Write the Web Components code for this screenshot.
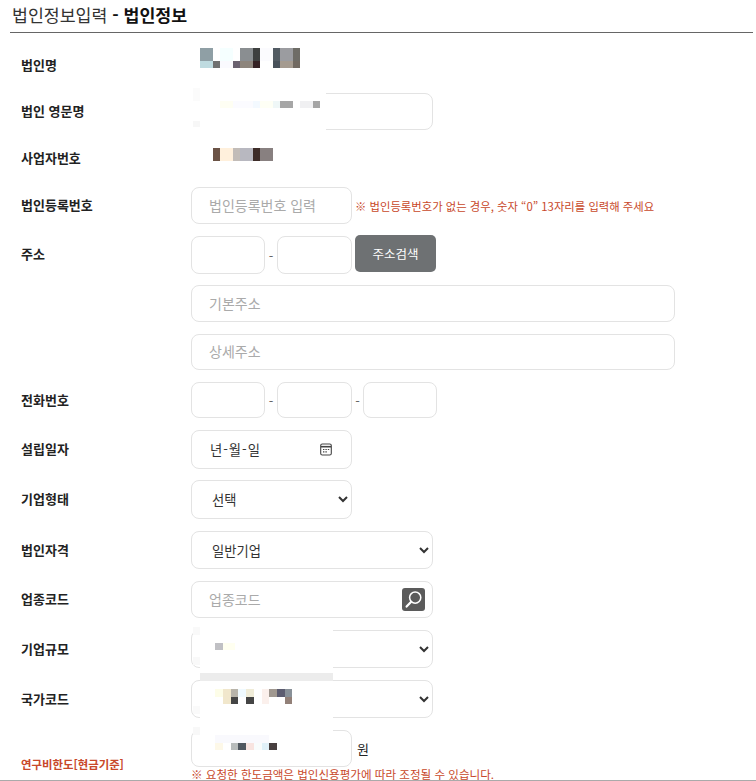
<!DOCTYPE html>
<html lang="ko">
<head>
<meta charset="utf-8">
<title>법인정보입력</title>
<style>
    html, body { margin: 0; background: #fff; }
    body { font-family: "Noto Sans CJK KR", "Noto Sans", sans-serif; color: #222; }
</style>
</head>
<body>
<corp-page>
    <page-header main="법인정보입력" sub="법인정보"></page-header>

    <form-row style="--gap:13px;--h:38px"><span slot="label">법인명</span></form-row>
    <form-row style="--gap:9px;--h:37px"><span slot="label">법인 영문명</span><text-input size="lg"></text-input></form-row>
    <form-row style="--gap:10px;--h:37px"><span slot="label">사업자번호</span></form-row>
    <form-row style="--gap:10px;--h:37px">
        <span slot="label">법인등록번호</span>
        <text-input size="md" placeholder="법인등록번호 입력"></text-input>
        <red-note style="margin-left:3px">※ 법인등록번호가 없는 경우, 숫자 “0” 13자리를 입력해 주세요</red-note>
    </form-row>
    <form-row style="--gap:11px;--h:38px">
        <span slot="label">주소</span>
        <text-input size="xs" style="margin-top:2px"></text-input>
        <dash-sep style="margin-top:2px"></dash-sep>
        <text-input size="sm" style="margin-top:2px"></text-input>
        <gray-button style="margin-left:3px">주소검색</gray-button>
    </form-row>
    <form-row style="--gap:12px;--h:37px"><text-input size="full" placeholder="기본주소"></text-input></form-row>
    <form-row style="--gap:12px;--h:36px"><text-input size="full" placeholder="상세주소"></text-input></form-row>
    <form-row style="--gap:12px;--h:36px">
        <span slot="label">전화번호</span>
        <text-input size="xs"></text-input>
        <dash-sep></dash-sep>
        <text-input size="sm"></text-input>
        <dash-sep style="width:11px"></dash-sep>
        <text-input size="xs"></text-input>
    </form-row>
    <form-row style="--gap:12px;--h:39px"><span slot="label">설립일자</span><date-input></date-input></form-row>
    <form-row style="--gap:11px;--h:39px"><span slot="label">기업형태</span><select-input size="md" value="선택"></select-input></form-row>
    <form-row style="--gap:12px;--h:38px"><span slot="label">법인자격</span><select-input size="lg" value="일반기업"></select-input></form-row>
    <form-row style="--gap:12px;--h:37px">
        <span slot="label">업종코드</span>
        <text-input size="lg" placeholder="업종코드" search></text-input>
    </form-row>
    <form-row style="--gap:12px;--h:38px"><span slot="label">기업규모</span><select-input size="lg"></select-input></form-row>
    <form-row style="--gap:12px;--h:38px"><span slot="label">국가코드</span><select-input size="lg"></select-input></form-row>
    <form-row style="--gap:12px;--h:37px;--label-align:end;--label-drop:-7px">
        <red-note slot="label" strong>연구비한도[현금기준]</red-note>
        <text-input size="md"></text-input>
        <span style="font-size:13px;margin-left:5px">원</span>
    </form-row>
    <form-row style="--gap:1px;--h:12px"><red-note wide>※ 요청한 한도금액은 법인신용평가에 따라 조정될 수 있습니다.</red-note></form-row>

    <!-- 가림 처리된 영역 -->
    <blur-patch box="176,33,150,98" cells="
        193,88,7,13,#fbfbfb;193,121,7,6,#f7f7f7;
        220,101,13,7,#fefef3;233,101,20,7,#fbfbff;253,101,7,7,#f3f9ff;260,101,13,7,#fefff5;
        273,101,7,7,#eff7f7;280,101,13,7,#a6a6a6;300,101,13,7,#f0f0f2;313,101,7,7,#a5a5a5;
        200,48,13,13,#8f9fa5;220,48,13,13,#f5ffff;240,48,13,13,#8a8e91;253,48,7,13,#3e403f;
        260,48,13,13,#fbfbfe;273,48,7,13,#525b63;280,48,13,13,#9b9ca0;293,48,7,13,#6e6c66;
        200,61,13,7,#bfdbe0;213,61,7,7,#707070;220,61,13,7,#fafafe;233,61,7,7,#6a6270;
        240,61,13,7,#8d857c;253,61,7,7,#352224;273,61,7,7,#48515a;280,61,13,7,#a59b90;293,61,7,7,#726a62;
        213,148,7,13,#6b5346;220,148,13,13,#fff0dc;233,148,7,13,#c2bcb8;240,148,13,13,#b8b8c0;
        253,148,7,13,#3d2c28;260,148,13,13,#888080"></blur-patch>
    <blur-patch box="200,627,133,46" cells="
        193,627,7,8,#f9f9f9;193,657,7,8,#f9f9f9;
        215,643,8,7,#c0c0c4;223,643,12,7,#fffff0"></blur-patch>
    <blur-patch box="200,673,133,8" fill="#ececec"></blur-patch>
    <blur-patch box="200,681,133,37" cells="
        193,706,7,8,#fafafa;
        215,689,8,8,#fdfde8;223,689,8,15,#f1e7cc;231,689,7,8,#b8b4aa;238,689,8,8,#f0faff;
        246,689,8,8,#f0ecd8;262,689,7,15,#fbf0ec;269,689,8,8,#a09890;277,689,8,8,#5c5c70;285,689,7,8,#889098;
        231,697,7,7,#454545;246,697,8,7,#454545;285,697,7,7,#928078"></blur-patch>
    <blur-patch box="200,718,133,48" cells="
        193,727,7,8,#f8f8f8;
        215,735,54,8,#f9f9fd;
        215,743,8,7,#fdf8e8;231,743,7,7,#b8bcbc;238,743,8,7,#505860;246,743,8,7,#f8e4e0;
        254,743,8,7,#f8fcfc;262,743,7,7,#e0f0f8;269,743,8,7,#484040"></blur-patch>
</corp-page>

<script>
// 페이지 프레임
class CorpPage extends HTMLElement {
    constructor() {
        super();
        this.attachShadow({ mode: 'open' });
        this.shadowRoot.innerHTML = `
            <style>
                :host {
                    display: flex;
                    flex-direction: column;
                    position: relative;
                    width: 756px;
                    height: 781px;
                    box-sizing: border-box;
                    border-bottom: 1px solid #aaa;
                    overflow: hidden;
                    background: #fff;
                }
            </style>
            <slot></slot>
        `;
    }
}

class PageHeader extends HTMLElement {
    constructor() {
        super();
        this.attachShadow({ mode: 'open' });
        this.shadowRoot.innerHTML = `
            <style>
                :host {
                    display: block;
                    margin: 0 3px 0 10px;
                    height: 33px;
                    box-sizing: border-box;
                    border-bottom: 1px solid #666;
                    padding-left: 2px;
                    font-size: 17.3px;
                    line-height: 30px;
                    color: #333;
                }
                b { color: #111; }
            </style>
            ${this.getAttribute('main')} <b>- ${this.getAttribute('sub')}</b>
        `;
    }
}

class FormRow extends HTMLElement {
    constructor() {
        super();
        this.attachShadow({ mode: 'open' });
        this.shadowRoot.innerHTML = `
            <style>
                :host {
                    display: grid;
                    grid-template-columns: 170px 1fr;
                    flex: none;
                    margin-top: var(--gap, 12px);
                    padding-left: 21px;
                    height: var(--h, 37px);
                }
                .label {
                    display: flex;
                    align-items: center;
                    align-self: var(--label-align, center);
                    margin-bottom: var(--label-drop, 0);
                    padding-bottom: 2px;
                    font-size: 13px;
                    font-weight: 700;
                    color: #222;
                }
                .field { display: flex; align-items: center; min-width: 0; }
            </style>
            <div class="label"><slot name="label"></slot></div>
            <div class="field"><slot></slot></div>
        `;
    }
}

const FIELD_WIDTHS = { xs: 74, sm: 75, md: 161, lg: 242, full: 484 };

const FIELD_CSS = `
    :host {
        display: block;
        position: relative;
        flex: none;
        height: 100%;
        box-sizing: border-box;
    }
    .box {
        display: block;
        width: 100%;
        height: 100%;
        box-sizing: border-box;
        border: 1px solid #e3e3e3;
        border-radius: 8px;
        background: #fff;
        font-family: "Noto Sans CJK KR", "Noto Sans", sans-serif;
        outline: none;
    }
`;

class TextInput extends HTMLElement {
    constructor() {
        super();
        this.attachShadow({ mode: 'open' });
        const placeholder = this.getAttribute('placeholder') || '';
        const width = FIELD_WIDTHS[this.getAttribute('size')] || 161;
        this.shadowRoot.innerHTML = `
            <style>
                ${FIELD_CSS}
                :host { width: ${width}px; }
                input { padding: 0 17px 2px; font-size: 14px; color: #333; }
                input::placeholder { color: #aaa; opacity: 1; }
                .search {
                    position: absolute;
                    top: 7px;
                    right: 8px;
                    width: 23px;
                    height: 23px;
                    border-radius: 3px;
                    background: #5b5b5b;
                }
                svg { display: block; }
            </style>
            <input class="box" type="text" placeholder="${placeholder}">
            ${this.hasAttribute('search') ? `
                <div class="search">
                    <svg width="23" height="23" viewBox="0 0 23 23" fill="none" stroke="#fff" stroke-linecap="round">
                        <circle cx="13.2" cy="9.6" r="5.6" stroke-width="1.5"/>
                        <path d="M9.2 13.8 L4.6 18.6" stroke-width="2.2"/>
                    </svg>
                </div>` : ''}
        `;
    }
}

class SelectInput extends HTMLElement {
    constructor() {
        super();
        this.attachShadow({ mode: 'open' });
        const value = this.getAttribute('value') || '';
        const width = FIELD_WIDTHS[this.getAttribute('size')] || 161;
        this.shadowRoot.innerHTML = `
            <style>
                ${FIELD_CSS}
                :host { width: ${width}px; }
                select { padding: 0 16px; font-size: 13.3px; color: #333; }
            </style>
            <select class="box"><option>${value}</option></select>
        `;
    }
}

class DateInput extends HTMLElement {
    constructor() {
        super();
        this.attachShadow({ mode: 'open' });
        this.shadowRoot.innerHTML = `
            <style>
                ${FIELD_CSS}
                :host { width: 161px; }
                .box {
                    display: flex;
                    align-items: center;
                    justify-content: space-between;
                    padding: 0 19px 1px 18px;
                    font-size: 13.3px;
                    letter-spacing: 1px;
                    color: #333;
                }
            </style>
            <div class="box">
                <span>년-월-일</span>
                <svg width="12" height="13" viewBox="0 0 12 13" fill="none" stroke="#444">
                    <rect x="0.7" y="1" width="10.6" height="11" rx="1.6" stroke-width="1.1"/>
                    <path d="M1 3.7 H11" stroke-width="1.6"/>
                    <path d="M3 6.5 H4.4 M5.4 6.5 H6.8 M7.8 6.5 H9.2 M3 8.8 H4.4 M5.4 8.8 H6.8" stroke-width="1.2"/>
                </svg>
            </div>
        `;
    }
}

class DashSep extends HTMLElement {
    constructor() {
        super();
        this.attachShadow({ mode: 'open' });
        this.shadowRoot.innerHTML = `
            <style>
                :host { display: block; flex: none; width: 12px; text-align: center; font-size: 13px; color: #666; }
            </style>
            -
        `;
    }
}

class GrayButton extends HTMLElement {
    constructor() {
        super();
        this.attachShadow({ mode: 'open' });
        this.shadowRoot.innerHTML = `
            <style>
                :host {
                    display: flex;
                    flex: none;
                    align-items: center;
                    justify-content: center;
                    align-self: flex-start;
                    width: 81px;
                    height: 37px;
                    border-radius: 5px;
                    background: #6e7173;
                    color: #fff;
                    font-size: 12.5px;
                }
            </style>
            <slot></slot>
        `;
    }
}

class RedNote extends HTMLElement {
    constructor() {
        super();
        this.attachShadow({ mode: 'open' });
        this.shadowRoot.innerHTML = `
            <style>
                :host {
                    display: block;
                    white-space: nowrap;
                    font-size: 11.35px;
                    color: #c8482a;
                }
                :host([strong]) { font-weight: 700; font-size: 11.4px; }
                :host([wide]) { font-size: 11.55px; line-height: 12px; }
            </style>
            <slot></slot>
        `;
    }
}

// 모자이크로 가려진 부분: 흰 판 + 픽셀 조각
class BlurPatch extends HTMLElement {
    constructor() {
        super();
        this.attachShadow({ mode: 'open' });
        const [x, y, w, h] = this.getAttribute('box').split(',').map(Number);
        const cells = (this.getAttribute('cells') || '')
            .split(';')
            .map(c => c.trim())
            .filter(Boolean)
            .map(c => {
                const [cx, cy, cw, ch, color] = c.split(',');
                return `<i style="left:${cx - x}px;top:${cy - y}px;width:${cw}px;height:${ch}px;background:${color}"></i>`;
            })
            .join('');
        this.shadowRoot.innerHTML = `
            <style>
                :host {
                    position: absolute;
                    left: ${x}px;
                    top: ${y}px;
                    width: ${w}px;
                    height: ${h}px;
                    background: ${this.getAttribute('fill') || '#fff'};
                }
                i { position: absolute; display: block; }
            </style>
            ${cells}
        `;
    }
}

customElements.define('corp-page', CorpPage);
customElements.define('page-header', PageHeader);
customElements.define('form-row', FormRow);
customElements.define('text-input', TextInput);
customElements.define('select-input', SelectInput);
customElements.define('date-input', DateInput);
customElements.define('dash-sep', DashSep);
customElements.define('gray-button', GrayButton);
customElements.define('red-note', RedNote);
customElements.define('blur-patch', BlurPatch);
</script>
</body>
</html>
